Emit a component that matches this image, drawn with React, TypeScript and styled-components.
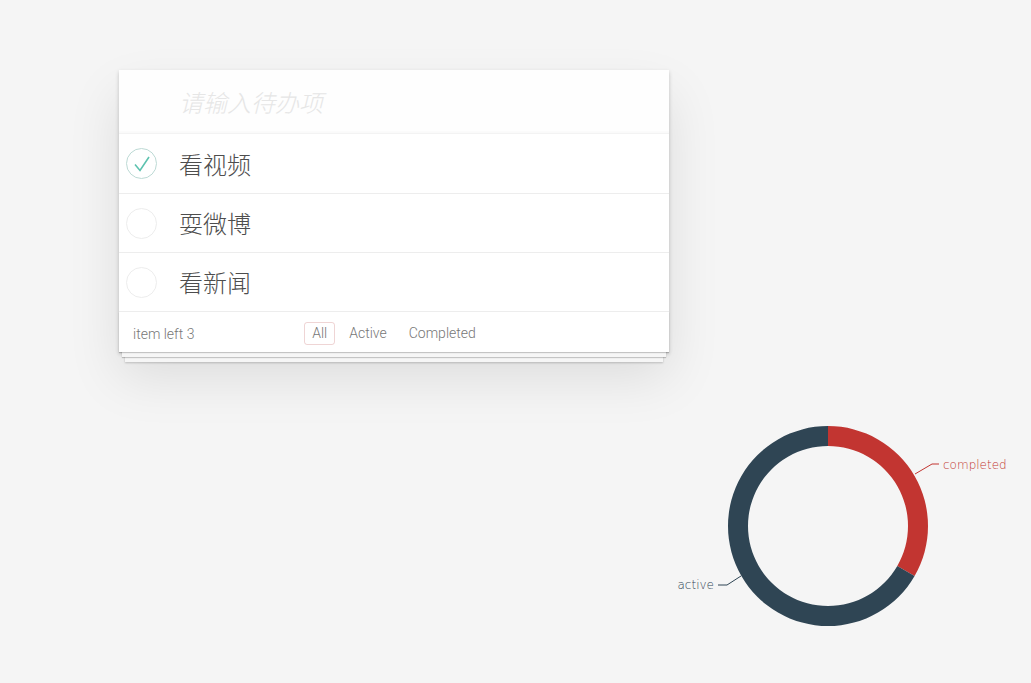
import { FC } from 'react';
import styled, { createGlobalStyle } from 'styled-components';

const GlobalStyle = createGlobalStyle`
    html, body {
        margin: 0;
        padding: 0;
        background: #f5f5f5;
    }
    body {
        font-family: Roboto, "Liberation Sans", "Noto Sans CJK SC", sans-serif;
        font-weight: 300;
        color: #4d4d4d;
    }
`

const Page = styled.div`
    width: 1031px;
    height: 683px;
    overflow: hidden;
    padding: 70px 0 0 119px;
    box-sizing: border-box;
    display: flex;
    flex-direction: column;
`

const Card = styled.section`
    position: relative;
    isolation: isolate;
    width: 550px;
    background: #fff;
    box-shadow: 0 2px 4px 0 rgba(0,0,0,0.2), 0 25px 50px 0 rgba(0,0,0,0.1);
`

const NewTodo = styled.input`
    display: block;
    width: 100%;
    height: 64px;
    box-sizing: border-box;
    margin: 0;
    padding: 0 16px 0 60px;
    border: none;
    border-bottom: 1px solid #f3f3f3;
    outline: none;
    background: rgba(0,0,0,0.003);
    box-shadow: inset 0 -2px 1px rgba(0,0,0,0.015);
    font-family: "Noto Sans CJK SC", sans-serif;
    font-size: 24px;
    font-weight: 300;
    color: #4d4d4d;
    &::placeholder {
        font-style: italic;
        color: #e6e6e6;
    }
`

const List = styled.ul`
    margin: 0;
    padding: 0;
    list-style: none;
`

const Item = styled.li`
    height: 59px;
    box-sizing: border-box;
    border-bottom: 1px solid #ededed;
    display: flex;
    align-items: center;
    &:first-child {
        height: 60px;
    }
`

const Toggle = styled.span<{ $done?: boolean }>`
    width: 31px;
    height: 31px;
    box-sizing: border-box;
    margin: 0 22px 0 7px;
    border-radius: 50%;
    border: 1px solid ${p => (p.$done ? '#bddad5' : '#ededed')};
    display: flex;
    align-items: center;
    justify-content: center;
`

const Label = styled.label`
    font-family: "Noto Sans CJK SC", sans-serif;
    font-size: 24px;
    font-weight: 300;
    color: #4d4d4d;
    line-height: 1;
`

const Footer = styled.footer`
    position: relative;
    height: 40px;
    box-sizing: border-box;
    padding: 10px 14px;
    display: grid;
    grid-template-columns: 1fr auto 1fr;
    align-items: center;
    font-size: 14px;
    color: #777;
    &::before {
        content: '';
        position: absolute;
        left: 0;
        right: 0;
        bottom: 0;
        height: 40px;
        z-index: -1;
        box-shadow: 0 1px 1px rgba(0,0,0,0.2),
            0 8px 0 -3px #f6f6f6,
            0 9px 1px -3px rgba(0,0,0,0.2),
            0 16px 0 -6px #f6f6f6,
            0 17px 2px -6px rgba(0,0,0,0.2);
    }
`

const Count = styled.span`
    line-height: 20px;
`

const Filters = styled.ul`
    margin: 0;
    padding: 0;
    list-style: none;
    display: flex;
    gap: 6px;
`

const Filter = styled.li<{ $selected?: boolean }>`
    padding: 3px 7px;
    border-radius: 3px;
    border: 1px solid ${p => (p.$selected ? 'rgba(175,47,47,0.2)' : 'transparent')};
    line-height: 15px;
    color: #777;
`

const ChartBox = styled.div`
    margin: 59px 0 0 541px;
    width: 371px;
    height: 230px;
`

const todos = [
    { title: '看视频', done: true },
    { title: '耍微博', done: false },
    { title: '看新闻', done: false },
];

const arc = (cx: number, cy: number, r0: number, r1: number, a0: number, a1: number) => {
    const pt = (r: number, a: number) => [cx + r * Math.sin(a), cy - r * Math.cos(a)];
    const large = a1 - a0 > Math.PI ? 1 : 0;
    const [x0, y0] = pt(r1, a0);
    const [x1, y1] = pt(r1, a1);
    const [x2, y2] = pt(r0, a1);
    const [x3, y3] = pt(r0, a0);
    return `M${x0} ${y0} A${r1} ${r1} 0 ${large} 1 ${x1} ${y1} L${x2} ${y2} A${r0} ${r0} 0 ${large} 0 ${x3} ${y3} Z`;
};

const Donut: FC = () => {
    const cx = 168;
    const cy = 115;
    const third = (Math.PI * 2) / 3;
    return (
        <svg width="371" height="230" viewBox="0 0 371 230">
            <path d={arc(cx, cy, 80, 100, 0, third)} fill="#c23531" />
            <path d={arc(cx, cy, 80, 100, third, Math.PI * 2)} fill="#2f4554" />
            <polyline points="255,63 272,53 279,53" fill="none" stroke="#c23531" strokeWidth="1" />
            <text x="283" y="54" fontSize="12" fill="#c23531" dominantBaseline="middle"
                fontFamily='"DejaVu Sans", sans-serif'>completed</text>
            <polyline points="81,165 67,174 58,174" fill="none" stroke="#2f4554" strokeWidth="1" />
            <text x="54" y="174" fontSize="12" fill="#2f4554" textAnchor="end" dominantBaseline="middle"
                fontFamily='"DejaVu Sans", sans-serif'>active</text>
        </svg>
    );
};

const App: FC = () => {
    return (
        <Page>
            <GlobalStyle />
            <Card>
                <NewTodo placeholder="请输入待办项" />
                <List>
                    {todos.map(todo => (
                        <Item key={todo.title}>
                            <Toggle $done={todo.done}>
                                {todo.done && (
                                    <svg width="20" height="20" viewBox="0 0 20 20">
                                        <path d="M3 10.5 L8 16.5 L17 3" fill="none" stroke="#5dc2af" strokeWidth="1.6" />
                                    </svg>
                                )}
                            </Toggle>
                            <Label>{todo.title}</Label>
                        </Item>
                    ))}
                </List>
                <Footer>
                    <Count>item left 3</Count>
                    <Filters>
                        <Filter $selected>All</Filter>
                        <Filter>Active</Filter>
                        <Filter>Completed</Filter>
                    </Filters>
                    <span />
                </Footer>
            </Card>
            <ChartBox>
                <Donut />
            </ChartBox>
        </Page>
    );
};

export default App;
